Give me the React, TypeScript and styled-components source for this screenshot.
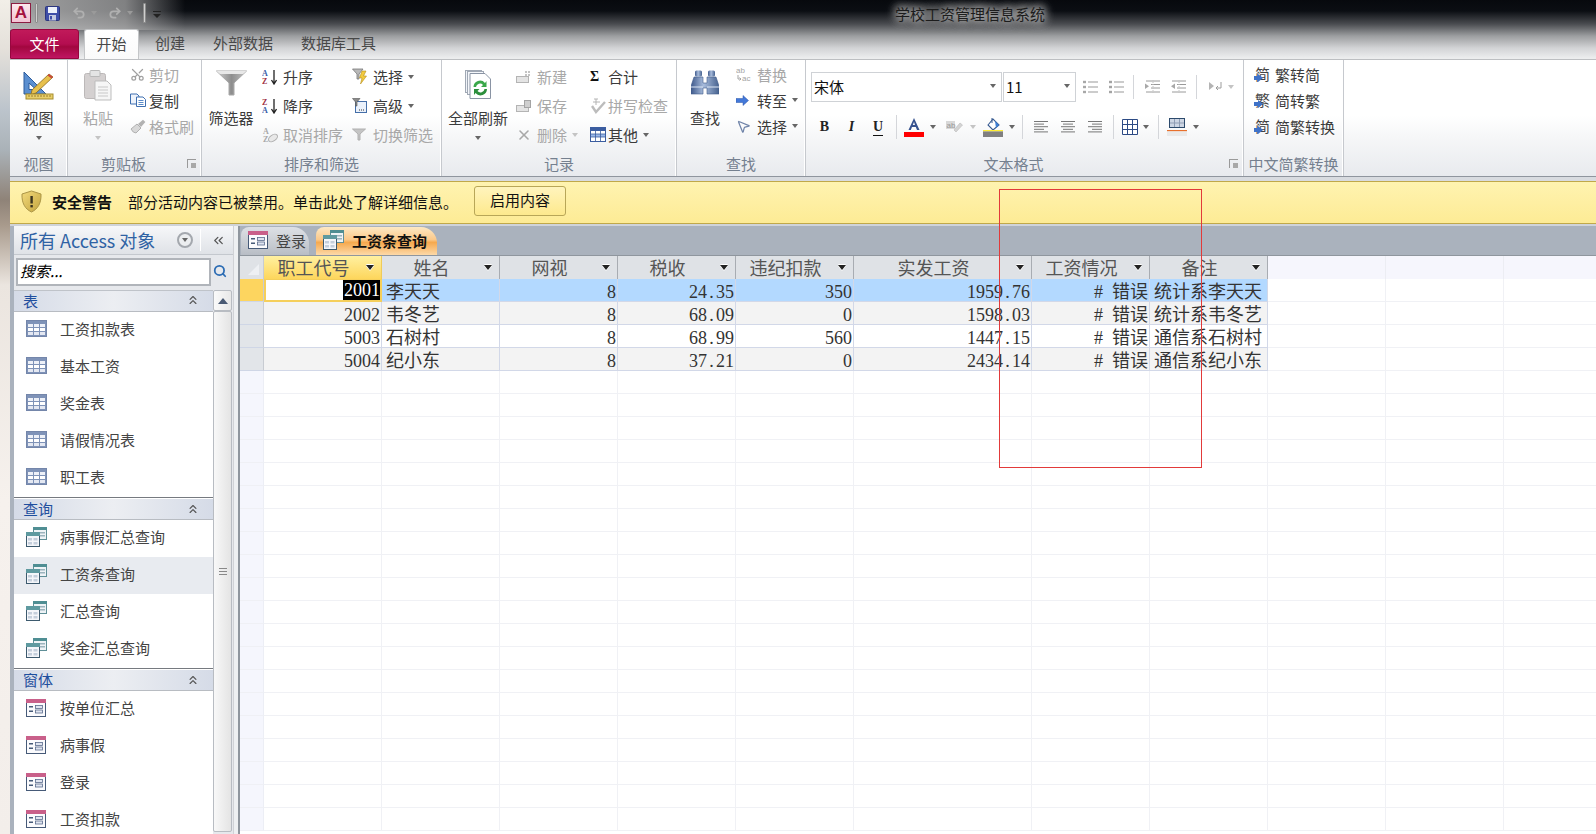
import React from "react";
import styled, { createGlobalStyle } from "styled-components";
import { ChevronsUp, ChevronsLeft, Scissors, X, MousePointer2, Search, Undo2, Redo2 } from "lucide-react";

const CJK = `"Noto Sans CJK SC", "Noto Sans", sans-serif`;
const SONG = `"Liberation Serif", "Noto Sans CJK SC", serif`;

const GlobalStyle = createGlobalStyle`
  html, body { margin: 0; padding: 0; height: 100%; overflow: hidden; }
  body { font-family: ${CJK}; background: #f3eeea; }
  * { box-sizing: border-box; }
`;

/* ---------- little drawings ---------- */

function TableIcon() {
  return (
    <svg width="21" height="17" viewBox="0 0 21 17">
      <rect x="0.5" y="0.5" width="20" height="16" fill="#7f93b8" stroke="#7486aa" />
      <rect x="2" y="4" width="5" height="3" fill="#eef1f8" /><rect x="8" y="4" width="5" height="3" fill="#eef1f8" /><rect x="14" y="4" width="5" height="3" fill="#eef1f8" />
      <rect x="2" y="8" width="5" height="3" fill="#fff" /><rect x="8" y="8" width="5" height="3" fill="#fff" /><rect x="14" y="8" width="5" height="3" fill="#fff" />
      <rect x="2" y="12" width="5" height="3" fill="#e4e8f2" /><rect x="8" y="12" width="5" height="3" fill="#e4e8f2" /><rect x="14" y="12" width="5" height="3" fill="#e4e8f2" />
    </svg>
  );
}

function QueryIcon() {
  return (
    <svg width="21" height="20" viewBox="0 0 21 20">
      <rect x="7.5" y="0.5" width="13" height="12" fill="#eef3f6" stroke="#5f8f97" />
      <rect x="7" y="0" width="14" height="3" fill="#4f8e93" />
      <rect x="14" y="5" width="5" height="1.5" fill="#9cb4bd" /><rect x="14" y="8" width="5" height="1.5" fill="#9cb4bd" />
      <rect x="0.5" y="5.5" width="13" height="14" fill="#f4f6fa" stroke="#3d5a6e" />
      <rect x="0" y="5" width="14" height="4" fill="#5f9aa0" />
      <rect x="2" y="11" width="4" height="2.5" fill="#c5cfdc" /><rect x="7.5" y="11" width="4" height="2.5" fill="#c5cfdc" />
      <rect x="2" y="15" width="4" height="2.5" fill="#c5cfdc" /><rect x="7.5" y="15" width="4" height="2.5" fill="#c5cfdc" />
    </svg>
  );
}

function FormIcon() {
  return (
    <svg width="20" height="18" viewBox="0 0 20 18">
      <rect x="0.5" y="0.5" width="19" height="17" fill="#fbfbfd" stroke="#465a78" />
      <rect x="0" y="0" width="20" height="4" fill="#c9608a" />
      <rect x="3" y="7" width="4" height="1.5" fill="#465a78" /><rect x="3" y="11.5" width="4" height="1.5" fill="#465a78" />
      <rect x="9.5" y="6.5" width="7" height="3" fill="#dfe4f0" stroke="#5a6c8c" strokeWidth="0.8" />
      <rect x="9.5" y="11" width="7" height="3" fill="#dfe4f0" stroke="#5a6c8c" strokeWidth="0.8" />
    </svg>
  );
}

function Shield() {
  return (
    <svg width="21" height="23" viewBox="0 0 21 23">
      <defs><linearGradient id="sh" x1="0" y1="0" x2="1" y2="1"><stop offset="0" stopColor="#f3da7c" /><stop offset="1" stopColor="#c2a43e" /></linearGradient></defs>
      <path d="M10.5 1 L20 4 C20.4 13 17 19 10.5 22 C4 19 .6 13 1 4 Z" fill="url(#sh)" stroke="#ab9546" />
      <rect x="9.4" y="6" width="2.4" height="7.5" fill="#3a3420" /><rect x="9.4" y="15" width="2.4" height="2.4" fill="#3a3420" />
    </svg>
  );
}

function SaveIcon() {
  return (
    <svg width="15" height="15" viewBox="0 0 15 15">
      <rect x="0.5" y="0.5" width="14" height="14" rx="1" fill="#3f4fa8" stroke="#2c367e" />
      <rect x="3" y="1" width="9" height="6" fill="#eef2fa" />
      <rect x="4" y="9" width="7" height="5.5" fill="#c5cbe0" /><rect x="5" y="10" width="2" height="3.5" fill="#3f4fa8" />
    </svg>
  );
}

function ViewIcon() {
  return (
    <svg width="31" height="30" viewBox="0 0 31 30">
      <path d="M1 2 L1 24 L23 24 Z M6 13 L6 19.5 L13 19.5 Z" fill="#5b8fd0" fillRule="evenodd" stroke="#2d5c9c" />
      <path d="M9 20 L26 4 L30 7 L13 23 L8 24.5 Z" fill="#e7c04c" stroke="#8a6a1c" strokeWidth="0.8" />
      <path d="M26 4 L30 7 L28.5 8.6 L24.5 5.4 Z" fill="#c9483c" />
      <rect x="3" y="24" width="27" height="5" fill="#e8cf6a" stroke="#a68c2c" />
      <path d="M6 25v2M9 25v2M12 25v2M15 25v2M18 25v2M21 25v2M24 25v2M27 25v2" stroke="#8a6a1c" strokeWidth="0.8" />
    </svg>
  );
}

function PasteIcon() {
  return (
    <svg width="28" height="31" viewBox="0 0 28 31">
      <rect x="0.5" y="3.5" width="21" height="25" rx="2" fill="#d4d0d0" stroke="#bcb8b8" />
      <rect x="6" y="0.5" width="10" height="6" rx="1" fill="#e4e4e4" stroke="#b8b8b8" />
      <path d="M11 11 H23 L27 15 V30 H11 Z" fill="#f6f6f6" stroke="#bdbdbd" />
      <path d="M14 17h10M14 20h10M14 23h10M14 26h10" stroke="#c8c8c8" />
    </svg>
  );
}

function CopyIcon() {
  return (
    <svg width="16" height="14" viewBox="0 0 16 14">
      <path d="M.5 1 H7 L9 3 V11 H.5 Z" fill="#eef3fb" stroke="#3f6fb0" />
      <path d="M6.5 4 H13 L15.5 6.5 V13.5 H6.5 Z" fill="#fff" stroke="#3f6fb0" />
      <path d="M8.5 7.5h5M8.5 9.5h5M8.5 11.5h5" stroke="#5b8bc8" />
    </svg>
  );
}

function BrushIcon() {
  return (
    <svg width="16" height="15" viewBox="0 0 16 15">
      <path d="M1 10 L7 5 L11 9 L6 14 Q3 14 1 10Z" fill="#d8d8d8" stroke="#b0b0b0" />
      <path d="M8 5 L13 .8 L15.4 3 L11 8 Z" fill="#b2b2b2" />
    </svg>
  );
}

function FunnelIcon() {
  return (
    <svg width="31" height="26" viewBox="0 0 31 26">
      <defs><linearGradient id="fn" x1="0" y1="0" x2="1" y2="0"><stop offset="0" stopColor="#cfcfcf" /><stop offset=".5" stopColor="#8e8e8e" /><stop offset="1" stopColor="#c0c0c0" /></linearGradient></defs>
      <path d="M.5 1 H30.5 L18 13 V25 H13 V13 Z" fill="url(#fn)" stroke="#a8a8a8" />
      <path d="M.5 1 H30.5 L27 4 H4 Z" fill="#e8e8e8" />
    </svg>
  );
}

const svgLetter = { fontFamily: `"Liberation Serif", serif`, fontWeight: 700, fontSize: 8 };

function SortIcon({ down }: { down?: boolean }) {
  return (
    <svg width="15" height="16" viewBox="0 0 15 16">
      <text x="0" y="7" fill={down ? "#a03040" : "#3a5da8"} style={svgLetter}>{down ? "Z" : "A"}</text>
      <text x="0" y="15" fill={down ? "#3a5da8" : "#a03040"} style={svgLetter}>{down ? "A" : "Z"}</text>
      <path d="M12 1 V14 M9.5 11 L12 15 L14.5 11" stroke="#222" strokeWidth="1.3" fill="none" />
    </svg>
  );
}

function ClearSortIcon() {
  return (
    <svg width="16" height="16" viewBox="0 0 16 16">
      <text x="1" y="7" fill="#a8a8a8" style={svgLetter}>A</text>
      <text x="1" y="15" fill="#a8a8a8" style={svgLetter}>Z</text>
      <ellipse cx="11" cy="11" rx="5" ry="3" transform="rotate(-35 11 11)" fill="#e8e8e8" stroke="#b0b0b0" />
    </svg>
  );
}

function SelFilterIcon() {
  return (
    <svg width="16" height="17" viewBox="0 0 16 17">
      <path d="M.5 1 H11 L7 6 V11 H5 V6 Z" fill="#b9b9b9" stroke="#777" strokeWidth=".8" />
      <path d="M10 3 L14 3 L11.5 8 L14.5 8 L8.5 16 L10 10 L7.5 10 Z" fill="#f2ca3e" stroke="#b58d1a" strokeWidth=".6" />
    </svg>
  );
}

function AdvFilterIcon() {
  return (
    <svg width="15" height="15" viewBox="0 0 15 15">
      <rect x="3.5" y="3.5" width="11" height="11" fill="#eaf1fb" stroke="#446ea8" />
      <path d="M7 12h1M9 12h1M11 12h1" stroke="#333" />
      <path d="M.5 .5 H8 L5 4 V8 H3.5 V4 Z" fill="#8a8a8a" stroke="#555" strokeWidth=".6" />
    </svg>
  );
}

function ToggleFilterIcon() {
  return (
    <svg width="14" height="13" viewBox="0 0 14 13">
      <path d="M.5 1 H13.5 L8 6 V12 H6 V6 Z" fill="#c4c4c4" stroke="#b0b0b0" />
    </svg>
  );
}

function RefreshIcon() {
  return (
    <svg width="26" height="29" viewBox="0 0 26 29">
      <rect x="0.5" y="0.5" width="16" height="22" fill="#f0f3f8" stroke="#a0a8b4" />
      <rect x="2.5" y="1.5" width="16" height="23" fill="#f4f6fa" stroke="#a0a8b4" />
      <path d="M5 3.5 H20 L25.5 9 V28.5 H5 Z" fill="#fff" stroke="#8a94a4" />
      <path d="M8.5 17 A6.5 6.5 0 0 1 20 13 L21.5 11 V17 H16 L18 15 A4 4 0 0 0 11 17 Z" fill="#3aa84a" />
      <path d="M22 19 A6.5 6.5 0 0 1 10.5 23 L9 25 V19 H14.5 L12.5 21 A4 4 0 0 0 19.5 19 Z" fill="#2c8f3c" />
    </svg>
  );
}

function GrayRecordIcon({ save }: { save?: boolean }) {
  return (
    <svg width="15" height="12" viewBox="0 0 15 12">
      <rect x="0.5" y="5.5" width="12" height="6" fill="#e4e4e4" stroke="#b4b4b4" />
      {save ? <rect x="8.5" y="0.5" width="6" height="7" fill="#cfcfcf" stroke="#a4a4a4" /> : <path d="M9 0h2v2H9zM12 0h2v2h-2zM9 3h2v2H9zM12 3h2v2h-2z" fill="#c4c4c4" />}
    </svg>
  );
}

function SpellIcon() {
  return (
    <svg width="16" height="16" viewBox="0 0 16 16">
      <path d="M4 1h4M3 4h7M6 1v6" stroke="#b4b4b4" />
      <path d="M2 8 L6 14 L15 4" stroke="#bcbcbc" strokeWidth="2.4" fill="none" />
    </svg>
  );
}

function OtherIcon() {
  return (
    <svg width="16" height="15" viewBox="0 0 16 15">
      <rect x="0.5" y="0.5" width="15" height="14" fill="#fff" stroke="#3b5da0" />
      <rect x="0" y="0" width="16" height="4" fill="#3b5da0" />
      <rect x="1" y="7" width="14" height="3" fill="#9ab8e8" />
      <path d="M5.5 4v10M10.5 4v10M1 7h14M1 10h14" stroke="#3b5da0" strokeWidth=".8" />
    </svg>
  );
}

function BinocularsIcon() {
  return (
    <svg width="28" height="25" viewBox="0 0 28 25">
      <defs><linearGradient id="bn" x1="0" y1="0" x2="1" y2="0"><stop offset="0" stopColor="#3f5a8c" /><stop offset=".45" stopColor="#a8bcdc" /><stop offset="1" stopColor="#46628f" /></linearGradient></defs>
      <rect x="4" y="0.5" width="7" height="6" rx="1.5" fill="url(#bn)" /><rect x="17" y="0.5" width="7" height="6" rx="1.5" fill="url(#bn)" />
      <path d="M3 7 H12 V13 H16 V7 H25 L28 16 V24 H16 V18 H12 V24 H0 V16 Z" fill="url(#bn)" stroke="#3f5a8c" strokeWidth=".6" />
      <path d="M0 17h12M16 17h12" stroke="#dce6f4" />
    </svg>
  );
}

function ReplaceIcon() {
  return (
    <svg width="17" height="16" viewBox="0 0 17 16">
      <text x="0" y="7" fontSize="8" fill="#a4a4a4" fontFamily="Liberation Sans">ab</text>
      <text x="6" y="15" fontSize="8" fill="#a4a4a4" fontFamily="Liberation Sans">ac</text>
      <path d="M2 9 V13 H5 M3.5 11.5 L5 13 L3.5 14.5" stroke="#a4a4a4" fill="none" />
    </svg>
  );
}

function GotoIcon() {
  return (
    <svg width="13" height="11" viewBox="0 0 13 11">
      <path d="M0 3.5 H7 V0.5 L12.5 5.5 L7 10.5 V7.5 H0 Z" fill="#4378d8" stroke="#2c56a8" strokeWidth=".5" />
    </svg>
  );
}

function BulletList({ numbered }: { numbered?: boolean }) {
  return (
    <svg width="15" height="14" viewBox="0 0 15 14">
      {[2, 7, 12].map((y) => (
        <g key={y}>
          <rect x="0" y={y - 1.2} width="3" height="2.4" fill={numbered ? "#a4a4a4" : "#a8a8a8"} />
          <rect x="5" y={y - 0.5} width="10" height="1" fill="#9a9a9a" />
        </g>
      ))}
    </svg>
  );
}

function IndentIcon({ out }: { out?: boolean }) {
  return (
    <svg width="16" height="14" viewBox="0 0 16 14">
      <path d="M2 1h14M7 4.5h9M7 8h9M2 12h14" stroke="#9a9a9a" />
      <path d={out ? "M5 3.5 L1 6.3 L5 9Z" : "M1 3.5 L5 6.3 L1 9Z"} fill="#a8a8a8" />
      <path d="M9 0v14" stroke="#c4c4c4" strokeDasharray="1 1" />
    </svg>
  );
}

function RtlIcon() {
  return (
    <svg width="14" height="12" viewBox="0 0 14 12">
      <path d="M1 1 L6 5 L1 9Z" fill="#b4b4b4" />
      <path d="M13 1 V7 H8 M10 5 L8 7 L10 9" stroke="#9c9c9c" fill="none" />
    </svg>
  );
}

function FontColorIcon() {
  return (
    <svg width="20" height="19" viewBox="0 0 20 19">
      <path d="M10 0 L15.5 12 H13 L11.8 9 H8 L6.8 12 H4.5 Z M8.8 7 H11 L10 4 Z" fill="#36528f" fillRule="evenodd" />
      <rect x="0" y="14" width="20" height="5" fill="#ff0000" />
    </svg>
  );
}

function HighlightIcon() {
  return (
    <svg width="17" height="12" viewBox="0 0 17 12">
      <rect x="0" y="0" width="9" height="8" fill="#d8d8d8" />
      <text x="0.5" y="7" fontSize="8" fontFamily="Liberation Sans" fill="#999">ab</text>
      <path d="M8 9 L14 2 L16.5 4 L10 11 Z" fill="#d4d4d4" stroke="#b8b8b8" strokeWidth=".6" />
    </svg>
  );
}

function FillIcon() {
  return (
    <svg width="20" height="20" viewBox="0 0 20 20">
      <path d="M5 8 L10 2 L16 8 L10 13 Z" fill="#fff" stroke="#35598f" strokeWidth="1.1" />
      <path d="M9 1 V6" stroke="#35598f" />
      <path d="M12 4 L16 8 L13 11 Z" fill="#3d7fd4" />
      <rect x="0" y="13" width="20" height="1.4" fill="#ffee33" />
      <rect x="0" y="14.4" width="20" height="5.6" fill="#808080" />
    </svg>
  );
}

function AlignIcon({ kind }: { kind: "left" | "center" | "right" }) {
  const lines = [14, 10, 14, 10, 14];
  return (
    <svg width="14" height="12" viewBox="0 0 14 12">
      {lines.map((w, i) => (
        <rect key={i} x={kind === "left" ? 0 : kind === "center" ? (14 - w) / 2 : 14 - w} y={i * 2.6} width={w} height="1" fill="#777" />
      ))}
    </svg>
  );
}

function GridIcon() {
  return (
    <svg width="16" height="16" viewBox="0 0 16 16">
      <path d="M.5.5h15v15H.5zM5.5.5v15M10.5.5v15M.5 5.5h15M.5 10.5h15" fill="#fff" stroke="#2c4a84" />
    </svg>
  );
}

function AltRowIcon() {
  return (
    <svg width="20" height="18" viewBox="0 0 20 18">
      <rect x="2.5" y="0.5" width="15" height="9" fill="#cdd6e4" stroke="#2c4a6c" />
      <path d="M7.5 1v8M12.5 1v8M3 5h14" stroke="#8f9db4" />
      <rect x="0" y="12" width="20" height="1.4" fill="#e8702c" />
      <rect x="0" y="13.4" width="20" height="4.6" fill="#eaeaea" />
    </svg>
  );
}

const ConvertBox = styled.span`
  position: relative;
  display: block;
  width: 16px;
  height: 18px;
  font-size: 15px;
  line-height: 17px;
  color: #444;
  & > svg {
    position: absolute;
    left: -1px;
    bottom: 1px;
  }
`;

function ConvertIcon({ ch }: { ch: string }) {
  return (
    <ConvertBox>
      {ch}
      <svg width="9" height="8" viewBox="0 0 9 8">
        <path d="M0 2 H4 V0 L9 4 L4 8 V6 H0 Z" fill="#3f72c8" />
      </svg>
    </ConvertBox>
  );
}

/* ---------- page ---------- */

const Screen = styled.div`
  display: flex;
  width: 1596px;
  height: 834px;
  overflow: hidden;
`;

const Wallpaper = styled.div`
  width: 10px;
  flex: none;
  background: linear-gradient(180deg, #f2efe8 0, #e4e0da 50px, #bcc4cc 110px, #aab2b8 150px, #8f8378 200px, #a89a8c 225px, #ebe5df 285px, #f6f1ed 500px, #f3eeea 834px);
`;

const Win = styled.div`
  flex: 1;
  min-width: 0;
  display: flex;
  flex-direction: column;
`;

const Chrome = styled.div`
  height: 59px;
  flex: none;
  background:
    linear-gradient(90deg, rgba(200, 200, 200, 0.8) 0, rgba(175, 175, 175, 0.72) 115px, rgba(120, 120, 120, 0) 175px) 0 0 / 100% 30px no-repeat,
    linear-gradient(180deg, #07090d 0, #0b0e13 11px, #4a4c50 24px, #9c9ea0 36px, #d2d3d5 48px, #ecedee 58px);
`;

const TitleRow = styled.div`
  height: 29px;
  display: flex;
  align-items: center;
  padding-left: 1px;
`;

const AppLogo = styled.div`
  width: 20px;
  height: 20px;
  margin-top: -3px;
  background: linear-gradient(180deg, #fbe8ee, #f2c4d4);
  border: 1px solid #8c1c42;
  color: #a3123f;
  font: 700 17px/18px "Liberation Sans", sans-serif;
  text-align: center;
`;

const QatSep = styled.div`
  width: 3px;
  height: 20px;
  margin: -3px 7px 0 4px;
  background: #cfcfcf;
  border: 1px solid #8c8c8c;
  border-radius: 1px;
`;

const QatBtn = styled.div<{ $w: number }>`
  width: ${(p) => p.$w}px;
  margin-top: -3px;
  display: flex;
  align-items: center;
  color: #b0b0b0;
`;

const QatCaret = styled.span`
  margin-left: 5px;
  width: 0;
  height: 0;
  border-top: 4px solid #9a9a9a;
  border-left: 3px solid transparent;
  border-right: 3px solid transparent;
`;

const QatMore = styled.div`
  width: 8px;
  margin-top: -1px;
  border-top: 1px solid #222;
  height: 6px;
  &::after {
    content: "";
    display: block;
    margin: 2px 0 0 0;
    width: 0;
    height: 0;
    border-top: 4px solid #222;
    border-left: 4px solid transparent;
    border-right: 4px solid transparent;
  }
`;

const WindowTitle = styled.div`
  margin-left: 734px;
  margin-top: -2px;
  font-size: 15px;
  color: #1c1c1c;
  text-shadow: 0 0 8px #c8c8c8, 0 0 8px #b8b8b8, 0 0 12px #aaa, 0 0 14px #999;
`;

const TabRow = styled.div`
  height: 30px;
  display: flex;
  align-items: flex-end;
`;

const FileTab = styled.div`
  width: 69px;
  height: 30px;
  border-radius: 3px 3px 0 0;
  border: 1px solid #97063f;
  background: linear-gradient(180deg, #c11a5a 0, #b40d50 50%, #a2073f 60%, #c01662 100%);
  color: #fff;
  font-size: 15px;
  line-height: 27px;
  text-align: center;
`;

const RibbonTab = styled.div<{ $active?: boolean; $w: number }>`
  width: ${(p) => p.$w}px;
  height: 30px;
  margin-left: ${(p) => (p.$active ? 5 : 0)}px;
  font-size: 15px;
  line-height: 27px;
  text-align: center;
  color: #484848;
  border-radius: 3px 3px 0 0;
  ${(p) => (p.$active ? "background: linear-gradient(180deg,#fff,#fafafa); border: 1px solid #c4c6c8; border-bottom: 0;" : "")}
`;

const Ribbon = styled.div`
  height: 117px;
  flex: none;
  display: flex;
  border-top: 1px solid #bdbfc2;
  background: linear-gradient(180deg, #fff 0, #fff 48%, #f6f7f8 66%, #e8eaee 100%);
`;

const Group = styled.div<{ $w: number }>`
  width: ${(p) => p.$w}px;
  flex: none;
  display: flex;
  flex-direction: column;
  border-right: 1px solid #c6c9ce;
  box-shadow: inset -1px 0 0 #fff;
`;

const GroupBody = styled.div<{ $pl?: number }>`
  height: 92px;
  display: flex;
  padding-left: ${(p) => p.$pl ?? 0}px;
`;

const GroupLabel = styled.div<{ $launcher?: boolean }>`
  position: relative;
  flex: 1;
  font-size: 15px;
  line-height: 23px;
  text-align: center;
  color: #75808f;
  white-space: nowrap;
  padding-right: ${(p) => (p.$launcher ? 22 : 0)}px;
`;

const Launcher = styled.span`
  position: absolute;
  right: 5px;
  top: 7px;
  width: 9px;
  height: 9px;
  border-left: 1px solid #9a9a9a;
  border-top: 1px solid #9a9a9a;
  &::after {
    content: "";
    position: absolute;
    right: 0;
    bottom: 0;
    width: 5px;
    height: 5px;
    background: #a8a8a8;
  }
`;

const BigBtn = styled.div<{ $w: number; $muted?: boolean }>`
  width: ${(p) => p.$w}px;
  flex: none;
  display: flex;
  flex-direction: column;
  align-items: center;
  color: ${(p) => (p.$muted ? "#a8a8a8" : "#3b3b3b")};
  font-size: 15px;
  white-space: nowrap;
`;

const BigIcon = styled.div`
  height: 37px;
  padding-top: 10px;
  display: flex;
  align-items: flex-start;
  justify-content: center;
  box-sizing: content-box;
`;

const BigText = styled.div`
  height: 22px;
  line-height: 22px;
`;

const Caret = styled.span<{ $light?: boolean }>`
  display: inline-block;
  flex: none;
  width: 0;
  height: 0;
  border-top: 4px solid ${(p) => (p.$light ? "#c4c4c4" : "#666")};
  border-left: 3px solid transparent;
  border-right: 3px solid transparent;
`;

const BigCaret = styled(Caret)`
  margin-top: 7px;
`;

const ToolCol = styled.div<{ $w?: number; $ml?: number; $rowH: number; $pt: number }>`
  ${(p) => (p.$w ? `width: ${p.$w}px; flex: none;` : "")}
  margin-left: ${(p) => p.$ml ?? 0}px;
  padding-top: ${(p) => p.$pt}px;
  display: grid;
  grid-auto-rows: ${(p) => p.$rowH}px;
`;

const Tool = styled.div<{ $muted?: boolean }>`
  display: flex;
  align-items: center;
  font-size: 15px;
  white-space: nowrap;
  color: ${(p) => (p.$muted ? "#a8a8a8" : "#3b3b3b")};
`;

const ToolIcon = styled.span<{ $w: number }>`
  width: ${(p) => p.$w}px;
  flex: none;
  display: flex;
  align-items: center;
`;

const ToolCaret = styled(Caret)`
  margin-left: 5px;
`;

const VerticalScissors = styled(Scissors)`
  transform: rotate(-90deg);
`;

const FormatStack = styled.div`
  padding: 12px 0 0 5px;
`;

const FormatRow = styled.div<{ $mt?: number; $h: number }>`
  height: ${(p) => p.$h}px;
  margin-top: ${(p) => p.$mt ?? 0}px;
  display: flex;
  align-items: center;
`;

const Select = styled.div<{ $w: number }>`
  width: ${(p) => p.$w}px;
  height: 30px;
  padding: 0 5px 2px 2px;
  display: flex;
  align-items: center;
  justify-content: space-between;
  background: #fff;
  border: 1px solid #cfd2d6;
  font-size: 15px;
  color: #111;
  margin-right: 1px;
`;

const FmtBtn = styled.div<{ $w: number }>`
  width: ${(p) => p.$w}px;
  flex: none;
  display: flex;
  align-items: center;
  justify-content: center;
`;

const FmtSep = styled.div<{ $ml: number; $mr: number }>`
  width: 1px;
  height: 24px;
  flex: none;
  margin: 0 ${(p) => p.$mr}px 0 ${(p) => p.$ml}px;
  background: #d4d6da;
`;

const FaceLetter = styled.span<{ $italic?: boolean; $under?: boolean }>`
  font: ${(p) => (p.$italic ? "italic 700" : "700")} 14px/16px "Liberation Serif", serif;
  color: #222;
  ${(p) => (p.$under ? "border-bottom: 1px solid #111;" : "")}
`;

const SigmaGlyph = styled.span`
  font: 700 14px/16px "Liberation Serif", serif;
  color: #111;
`;

const RibbonGap = styled.div`
  height: 5px;
  flex: none;
  border-top: 1px solid #8f959e;
  background: #d8dbe0;
`;

const SecurityBar = styled.div`
  height: 43px;
  flex: none;
  display: flex;
  align-items: center;
  padding: 0 0 3px 11px;
  background: linear-gradient(180deg, #fff3b0 0, #fdeb95 100%);
  border-top: 1px solid #c0a84a;
  border-bottom: 1px solid #c0a84a;
  font-size: 15px;
  color: #111;
`;

const WarnTitle = styled.b`
  margin-left: 10px;
  font-weight: 700;
`;

const WarnText = styled.span`
  margin-left: 16px;
`;

const EnableBtn = styled.div`
  width: 92px;
  height: 30px;
  margin-left: 16px;
  border: 1px solid #b8a658;
  border-radius: 3px;
  background: linear-gradient(180deg, #fff4bd, #fde98d);
  text-align: center;
  line-height: 26px;
`;

const Work = styled.div`
  flex: 1;
  min-height: 0;
  display: flex;
  border-top: 2px solid #cfd3d9;
`;

const NavPane = styled.div`
  width: 223px;
  flex: none;
  display: flex;
  flex-direction: column;
  border-left: 4px solid #aab2bd;
  background: #fff;
`;

const NavHeader = styled.div`
  height: 29px;
  flex: none;
  display: flex;
  align-items: center;
  padding-left: 6px;
  background: linear-gradient(180deg, #f6f7f9, #dfe2e7);
  border-bottom: 1px solid #c4c8ce;
  color: #2f62a4;
  font-size: 18px;
`;

const NavTitle = styled.span`
  width: 157px;
  white-space: nowrap;
`;

const NavMenu = styled.span`
  width: 16px;
  height: 16px;
  border: 2px solid #a4a8ae;
  border-radius: 50%;
  background: #eceef0;
  display: flex;
  align-items: center;
  justify-content: center;
`;

const NavMenuSep = styled.span`
  width: 1px;
  height: 22px;
  margin: 0 10px 0 7px;
  background: #fff;
`;

const SearchRow = styled.div`
  height: 35px;
  flex: none;
  display: flex;
  align-items: flex-start;
  padding: 3px 0 0 2px;
  background: #e6e8ec;
`;

const SearchBox = styled.div`
  width: 195px;
  height: 28px;
  border: 2px solid #b0b4ba;
  background: #fff;
  font-size: 15px;
  font-style: italic;
  line-height: 21px;
  padding-left: 2px;
  color: #000;
`;

const SearchBtn = styled.span`
  margin: 6px 0 0 2px;
  color: #2c6cb4;
  display: flex;
`;

const NavBody = styled.div`
  flex: 1;
  min-height: 0;
  display: flex;
  background: #e6e8ec;
`;

const NavList = styled.div`
  width: 199px;
  flex: none;
  overflow: hidden;
  background: #fff;
  border-top: 1px solid #bfc3c9;
`;

const SectionHead = styled.div<{ $first?: boolean }>`
  height: ${(p) => (p.$first ? 21 : 23)}px;
  display: flex;
  align-items: center;
  justify-content: space-between;
  padding: ${(p) => (p.$first ? "0 13px 2px 9px" : "0 13px 0 9px")};
  font-size: 15px;
  color: #1f4f9e;
  border-bottom: 1px solid #b8bcc2;
  ${(p) => (p.$first ? "" : "border-top: 1px solid #767a80; box-shadow: inset 0 1px 0 #fff;")}
  background: linear-gradient(90deg, #d5dbe7 0, #eceef2 50%, #d5dbe7 100%);
`;

const NavItem = styled.div<{ $active?: boolean }>`
  height: 37px;
  display: flex;
  align-items: center;
  padding: 0 0 4px 12px;
  font-size: 15px;
  color: #444;
  ${(p) => (p.$active ? "background: #e8ebf0;" : "")}
`;

const NavIconBox = styled.span`
  width: 34px;
  flex: none;
  display: flex;
`;

const Scroll = styled.div`
  width: 19px;
  flex: none;
  display: flex;
  flex-direction: column;
  margin-bottom: 2px;
`;

const ScrollUp = styled.div`
  height: 21px;
  flex: none;
  border: 1px solid #b8bcc2;
  border-radius: 2px;
  background: linear-gradient(90deg, #fafafa, #e8e8e8);
  display: flex;
  align-items: center;
  justify-content: center;
  &::after {
    content: "";
    width: 0;
    height: 0;
    border-bottom: 6px solid #4a5a74;
    border-left: 5px solid transparent;
    border-right: 5px solid transparent;
  }
`;

const ScrollThumb = styled.div`
  flex: 1;
  border: 1px solid #b8bcc2;
  border-radius: 2px;
  background: linear-gradient(90deg, #f8f8f8, #e4e4e4);
  display: flex;
  align-items: center;
  justify-content: center;
`;

const Grip = styled.div`
  width: 8px;
  height: 7px;
  border-top: 1px solid #888;
  border-bottom: 1px solid #888;
  &::after {
    content: "";
    display: block;
    margin-top: 2px;
    height: 1px;
    background: #888;
  }
`;

const Splitter = styled.div`
  width: 7px;
  flex: none;
  background: #eef0f2;
  border-left: 1px solid #d0d2d6;
  border-right: 2px solid #8f969e;
`;

const Main = styled.div`
  flex: 1;
  min-width: 0;
  display: flex;
  flex-direction: column;
  overflow: hidden;
`;

const DocTabs = styled.div`
  height: 29px;
  flex: none;
  display: flex;
  align-items: flex-end;
  padding-left: 1px;
  background: #aab2bd;
`;

const DocTab = styled.div<{ $active?: boolean }>`
  width: ${(p) => (p.$active ? 121 : 68)}px;
  height: 28px;
  margin-right: ${(p) => (p.$active ? 0 : 7)}px;
  display: flex;
  align-items: center;
  padding: 0 0 2px 7px;
  border-radius: 8px 16px 0 0;
  font-size: 15px;
  font-weight: ${(p) => (p.$active ? 700 : 400)};
  color: ${(p) => (p.$active ? "#111" : "#444")};
  background: ${(p) =>
    p.$active
      ? "linear-gradient(180deg, #fde8c4 0, #fbc98a 45%, #f6a94e 55%, #fdd9a8 100%)"
      : "linear-gradient(180deg, #dde0e5 0, #c8ccd2 60%, #b8bdc5 100%)"};
`;

const DocTabText = styled.span`
  margin-left: 8px;
  white-space: nowrap;
`;

const Sheet = styled.div`
  flex: 1;
  min-height: 0;
  overflow: hidden;
  background: #fff;
  border-top: 1px solid #8f969e;
`;

const COLS = "24px 118px 118px 118px 118px 118px 178px 118px 118px 118px 118px 118px";

const SheetRow = styled.div`
  display: grid;
  grid-template-columns: ${COLS};
  height: 23px;
`;

const Corner = styled.div`
  background: #dfe2e6;
  border-right: 1px solid #c8ccd2;
  display: flex;
  align-items: flex-end;
  justify-content: flex-end;
  padding: 0 4px 4px 0;
  &::after {
    content: "";
    width: 0;
    height: 0;
    border-bottom: 11px solid #eef0f3;
    border-left: 11px solid transparent;
  }
`;

const HeadCell = styled.div<{ $active?: boolean }>`
  position: relative;
  font-size: 18px;
  line-height: 23px;
  text-align: center;
  color: #555;
  padding-right: 18px;
  border-right: 1px solid #a8acb2;
  background: ${(p) => (p.$active ? "linear-gradient(180deg, #fff0a0, #fdd65c)" : "#dfe2e6")};
  ${(p) => (p.$active ? "border-right-color: #f0cb58;" : "")}
`;

const HeadArrow = styled.span`
  position: absolute;
  right: 7px;
  top: 9px;
  width: 0;
  height: 0;
  border-top: 5px solid #222;
  border-left: 4px solid transparent;
  border-right: 4px solid transparent;
  filter: drop-shadow(0 -1px 0 #fff) drop-shadow(0 1px 0 #fff);
`;

const HeadBlank = styled.div`
  background: #f6f6fd;
  border-right: 1px solid #ecedf3;
`;

const RowMark = styled.div<{ $current?: boolean; $blank?: boolean }>`
  background: ${(p) => (p.$current ? "#fdd55f" : p.$blank ? "#f5f6fd" : "#e2e5e9")};
  border-right: 1px solid ${(p) => (p.$blank ? "#eceef5" : "#c8ccd2")};
  border-bottom: 1px solid ${(p) => (p.$blank ? "#eff0f5" : "#cfd6e6")};
`;

const Cell = styled.div<{ $right?: boolean; $bg: string }>`
  font-family: ${SONG};
  font-size: 18px;
  line-height: 24px;
  color: #333;
  white-space: pre;
  overflow: hidden;
  background: ${(p) => p.$bg};
  text-align: ${(p) => (p.$right ? "right" : "left")};
  padding: ${(p) => (p.$right ? "1px 1px 0 0" : "1px 0 0 4px")};
  border-right: 1px solid #d2d8e8;
  border-bottom: 1px solid #d2d8e8;
`;

const CurrentCell = styled.div`
  font-family: ${SONG};
  font-size: 18px;
  line-height: 20px;
  height: 23px;
  overflow: hidden;
  text-align: right;
  background: #fff;
  border: 2px solid #f5cf5b;
  border-top-width: 1px;
`;

const Picked = styled.span`
  display: inline-block;
  background: #000;
  color: #fff;
  padding-left: 1px;
`;

const NumDot = styled.span`
  display: inline-block;
  width: 9px;
  text-align: center;
`;

const BlankCell = styled.div`
  border-right: 1px solid #f0f1f5;
  border-bottom: 1px solid #f0f1f5;
`;

const RedBox = styled.div`
  position: absolute;
  left: 999px;
  top: 189px;
  width: 203px;
  height: 279px;
  border: 1px solid #e23a3a;
`;

/* ---------- data ---------- */

const columns = ["职工代号", "姓名", "网视", "税收", "违纪扣款", "实发工资", "工资情况", "备注"];

const rows = [
  { id: "2001", name: "李天天", net: "8", tax: "24.35", fine: "350", pay: "1959.76", note: "统计系李天天" },
  { id: "2002", name: "韦冬艺", net: "8", tax: "68.09", fine: "0", pay: "1598.03", note: "统计系韦冬艺" },
  { id: "5003", name: "石树村", net: "8", tax: "68.99", fine: "560", pay: "1447.15", note: "通信系石树村" },
  { id: "5004", name: "纪小东", net: "8", tax: "37.21", fine: "0", pay: "2434.14", note: "通信系纪小东" },
];

const navSections = [
  { title: "表", icon: <TableIcon />, items: ["工资扣款表", "基本工资", "奖金表", "请假情况表", "职工表"] },
  { title: "查询", icon: <QueryIcon />, items: ["病事假汇总查询", "工资条查询", "汇总查询", "奖金汇总查询"] },
  { title: "窗体", icon: <FormIcon />, items: ["按单位汇总", "病事假", "登录", "工资扣款"] },
];

function Num({ value }: { value: string }) {
  const [whole, part] = value.split(".");
  return part ? <>{whole}<NumDot>.</NumDot>{part}</> : <>{value}</>;
}

function NavTool({ icon, w, label, muted, caret }: { icon: React.ReactNode; w: number; label: string; muted?: boolean; caret?: boolean }) {
  return (
    <Tool $muted={muted}>
      <ToolIcon $w={w}>{icon}</ToolIcon>
      {label}
      {caret && <ToolCaret $light={muted} />}
    </Tool>
  );
}

export default function App() {
  return (
    <>
      <GlobalStyle />
      <Screen>
        <Wallpaper />
        <Win>
          <Chrome>
            <TitleRow>
              <AppLogo>A</AppLogo>
              <QatSep />
              <QatBtn $w={27}><SaveIcon /></QatBtn>
              <QatBtn $w={36}><Undo2 size={14} strokeWidth={3} /><QatCaret /></QatBtn>
              <QatBtn $w={31}><Redo2 size={14} strokeWidth={3} /><QatCaret /></QatBtn>
              <QatSep />
              <QatMore />
              <WindowTitle>学校工资管理信息系统</WindowTitle>
            </TitleRow>
            <TabRow>
              <FileTab>文件</FileTab>
              <RibbonTab $active $w={55}>开始</RibbonTab>
              <RibbonTab $w={62}>创建</RibbonTab>
              <RibbonTab $w={84}>外部数据</RibbonTab>
              <RibbonTab $w={107}>数据库工具</RibbonTab>
            </TabRow>
          </Chrome>

          <Ribbon>
            <Group $w={58}>
              <GroupBody>
                <BigBtn $w={57}>
                  <BigIcon><ViewIcon /></BigIcon>
                  <BigText>视图</BigText>
                  <BigCaret />
                </BigBtn>
              </GroupBody>
              <GroupLabel>视图</GroupLabel>
            </Group>

            <Group $w={134}>
              <GroupBody $pl={7}>
                <BigBtn $w={46} $muted>
                  <BigIcon><PasteIcon /></BigIcon>
                  <BigText>粘贴</BigText>
                  <BigCaret $light />
                </BigBtn>
                <ToolCol $ml={9} $rowH={26} $pt={1}>
                  <NavTool w={19} icon={<VerticalScissors size={15} color="#a0a0a0" />} label="剪切" muted />
                  <NavTool w={19} icon={<CopyIcon />} label="复制" />
                  <NavTool w={19} icon={<BrushIcon />} label="格式刷" muted />
                </ToolCol>
              </GroupBody>
              <GroupLabel $launcher>剪贴板<Launcher /></GroupLabel>
            </Group>

            <Group $w={240}>
              <GroupBody $pl={6}>
                <BigBtn $w={46}>
                  <BigIcon><FunnelIcon /></BigIcon>
                  <BigText>筛选器</BigText>
                </BigBtn>
                <ToolCol $ml={8} $w={90} $rowH={29} $pt={2}>
                  <NavTool w={21} icon={<SortIcon />} label="升序" />
                  <NavTool w={21} icon={<SortIcon down />} label="降序" />
                  <NavTool w={21} icon={<ClearSortIcon />} label="取消排序" muted />
                </ToolCol>
                <ToolCol $rowH={29} $pt={2}>
                  <NavTool w={21} icon={<SelFilterIcon />} label="选择" caret />
                  <NavTool w={21} icon={<AdvFilterIcon />} label="高级" caret />
                  <NavTool w={21} icon={<ToggleFilterIcon />} label="切换筛选" muted />
                </ToolCol>
              </GroupBody>
              <GroupLabel>排序和筛选</GroupLabel>
            </Group>

            <Group $w={235}>
              <GroupBody $pl={6}>
                <BigBtn $w={60}>
                  <BigIcon><RefreshIcon /></BigIcon>
                  <BigText>全部刷新</BigText>
                  <BigCaret />
                </BigBtn>
                <ToolCol $ml={8} $w={74} $rowH={29} $pt={2}>
                  <NavTool w={21} icon={<GrayRecordIcon />} label="新建" muted />
                  <NavTool w={21} icon={<GrayRecordIcon save />} label="保存" muted />
                  <NavTool w={21} icon={<X size={16} strokeWidth={2.4} color="#a8a8a8" />} label="删除" muted caret />
                </ToolCol>
                <ToolCol $rowH={29} $pt={2}>
                  <NavTool w={18} icon={<SigmaGlyph>Σ</SigmaGlyph>} label="合计" />
                  <NavTool w={18} icon={<SpellIcon />} label="拼写检查" muted />
                  <NavTool w={18} icon={<OtherIcon />} label="其他" caret />
                </ToolCol>
              </GroupBody>
              <GroupLabel>记录</GroupLabel>
            </Group>

            <Group $w={129}>
              <GroupBody $pl={13}>
                <BigBtn $w={30}>
                  <BigIcon><BinocularsIcon /></BigIcon>
                  <BigText>查找</BigText>
                </BigBtn>
                <ToolCol $ml={16} $rowH={26} $pt={1}>
                  <NavTool w={21} icon={<ReplaceIcon />} label="替换" muted />
                  <NavTool w={21} icon={<GotoIcon />} label="转至" caret />
                  <NavTool w={21} icon={<MousePointer2 size={15} color="#6f83a8" />} label="选择" caret />
                </ToolCol>
              </GroupBody>
              <GroupLabel>查找</GroupLabel>
            </Group>

            <Group $w={438}>
              <GroupBody>
                <FormatStack>
                  <FormatRow $h={30}>
                    <Select $w={191}>宋体<Caret /></Select>
                    <Select $w={73}>11<Caret /></Select>
                    <FmtBtn $w={26}><BulletList /></FmtBtn>
                    <FmtBtn $w={26}><BulletList numbered /></FmtBtn>
                    <FmtSep $ml={4} $mr={5} />
                    <FmtBtn $w={26}><IndentIcon /></FmtBtn>
                    <FmtBtn $w={26}><IndentIcon out /></FmtBtn>
                    <FmtSep $ml={5} $mr={5} />
                    <FmtBtn $w={26}><RtlIcon /></FmtBtn>
                    <Caret $light />
                  </FormatRow>
                  <FormatRow $h={24} $mt={13}>
                    <FmtBtn $w={27}><FaceLetter>B</FaceLetter></FmtBtn>
                    <FmtBtn $w={27}><FaceLetter $italic>I</FaceLetter></FmtBtn>
                    <FmtBtn $w={26}><FaceLetter $under>U</FaceLetter></FmtBtn>
                    <FmtSep $ml={5} $mr={4} />
                    <FmtBtn $w={26}><FontColorIcon /></FmtBtn>
                    <FmtBtn $w={12}><Caret /></FmtBtn>
                    <FmtBtn $w={30}><HighlightIcon /></FmtBtn>
                    <FmtBtn $w={8}><Caret $light /></FmtBtn>
                    <FmtBtn $w={32}><FillIcon /></FmtBtn>
                    <FmtBtn $w={6}><Caret /></FmtBtn>
                    <FmtSep $ml={7} $mr={4} />
                    <FmtBtn $w={27}><AlignIcon kind="left" /></FmtBtn>
                    <FmtBtn $w={27}><AlignIcon kind="center" /></FmtBtn>
                    <FmtBtn $w={27}><AlignIcon kind="right" /></FmtBtn>
                    <FmtSep $ml={5} $mr={3} />
                    <FmtBtn $w={26}><GridIcon /></FmtBtn>
                    <FmtBtn $w={6}><Caret /></FmtBtn>
                    <FmtSep $ml={9} $mr={4} />
                    <FmtBtn $w={28}><AltRowIcon /></FmtBtn>
                    <FmtBtn $w={10}><Caret /></FmtBtn>
                  </FormatRow>
                </FormatStack>
              </GroupBody>
              <GroupLabel $launcher>文本格式<Launcher /></GroupLabel>
            </Group>

            <Group $w={100}>
              <GroupBody $pl={11}>
                <ToolCol $rowH={26} $pt={1}>
                  <NavTool w={20} icon={<ConvertIcon ch="简" />} label="繁转简" />
                  <NavTool w={20} icon={<ConvertIcon ch="繁" />} label="简转繁" />
                  <NavTool w={20} icon={<ConvertIcon ch="简" />} label="简繁转换" />
                </ToolCol>
              </GroupBody>
              <GroupLabel>中文简繁转换</GroupLabel>
            </Group>
          </Ribbon>
          <RibbonGap />

          <SecurityBar>
            <Shield />
            <WarnTitle>安全警告</WarnTitle>
            <WarnText>部分活动内容已被禁用。单击此处了解详细信息。</WarnText>
            <EnableBtn>启用内容</EnableBtn>
          </SecurityBar>

          <Work>
            <NavPane>
              <NavHeader>
                <NavTitle>所有 Access 对象</NavTitle>
                <NavMenu><Caret /></NavMenu>
                <NavMenuSep />
                <ChevronsLeft size={15} color="#555" />
              </NavHeader>
              <SearchRow>
                <SearchBox>搜索...</SearchBox>
                <SearchBtn><Search size={14} strokeWidth={3} /></SearchBtn>
              </SearchRow>
              <NavBody>
                <NavList>
                  {navSections.map((section, i) => (
                    <div key={section.title}>
                      <SectionHead $first={i === 0}>
                        {section.title}
                        <ChevronsUp size={14} color="#555" />
                      </SectionHead>
                      {section.items.map((item) => (
                        <NavItem key={item} $active={item === "工资条查询"}>
                          <NavIconBox>{section.icon}</NavIconBox>
                          {item}
                        </NavItem>
                      ))}
                    </div>
                  ))}
                </NavList>
                <Scroll>
                  <ScrollUp />
                  <ScrollThumb><Grip /></ScrollThumb>
                </Scroll>
              </NavBody>
            </NavPane>
            <Splitter />
            <Main>
              <DocTabs>
                <DocTab><FormIcon /><DocTabText>登录</DocTabText></DocTab>
                <DocTab $active><QueryIcon /><DocTabText>工资条查询</DocTabText></DocTab>
              </DocTabs>
              <Sheet>
                <SheetRow>
                  <Corner />
                  {columns.map((c, i) => (
                    <HeadCell key={c} $active={i === 0}>{c}<HeadArrow /></HeadCell>
                  ))}
                  <HeadBlank /><HeadBlank /><HeadBlank />
                </SheetRow>
                {rows.map((r, i) => {
                  const bg = i === 0 ? "#b3d9ff" : i % 2 === 1 ? "#f3f3f3" : "#fff";
                  return (
                    <SheetRow key={r.id}>
                      <RowMark $current={i === 0} />
                      {i === 0 ? (
                        <CurrentCell><Picked>{r.id}</Picked></CurrentCell>
                      ) : (
                        <Cell $right $bg={bg}>{r.id}</Cell>
                      )}
                      <Cell $bg={bg}>{r.name}</Cell>
                      <Cell $right $bg={bg}>{r.net}</Cell>
                      <Cell $right $bg={bg}><Num value={r.tax} /></Cell>
                      <Cell $right $bg={bg}>{r.fine}</Cell>
                      <Cell $right $bg={bg}><Num value={r.pay} /></Cell>
                      <Cell $right $bg={bg}>{"#  错误"}</Cell>
                      <Cell $bg={bg}>{r.note}</Cell>
                      <BlankCell /><BlankCell /><BlankCell />
                    </SheetRow>
                  );
                })}
                {Array.from({ length: 20 }, (_, i) => (
                  <SheetRow key={i}>
                    <RowMark $blank />
                    {Array.from({ length: 11 }, (_, j) => <BlankCell key={j} />)}
                  </SheetRow>
                ))}
              </Sheet>
            </Main>
          </Work>
        </Win>
      </Screen>
      <RedBox />
    </>
  );
}
